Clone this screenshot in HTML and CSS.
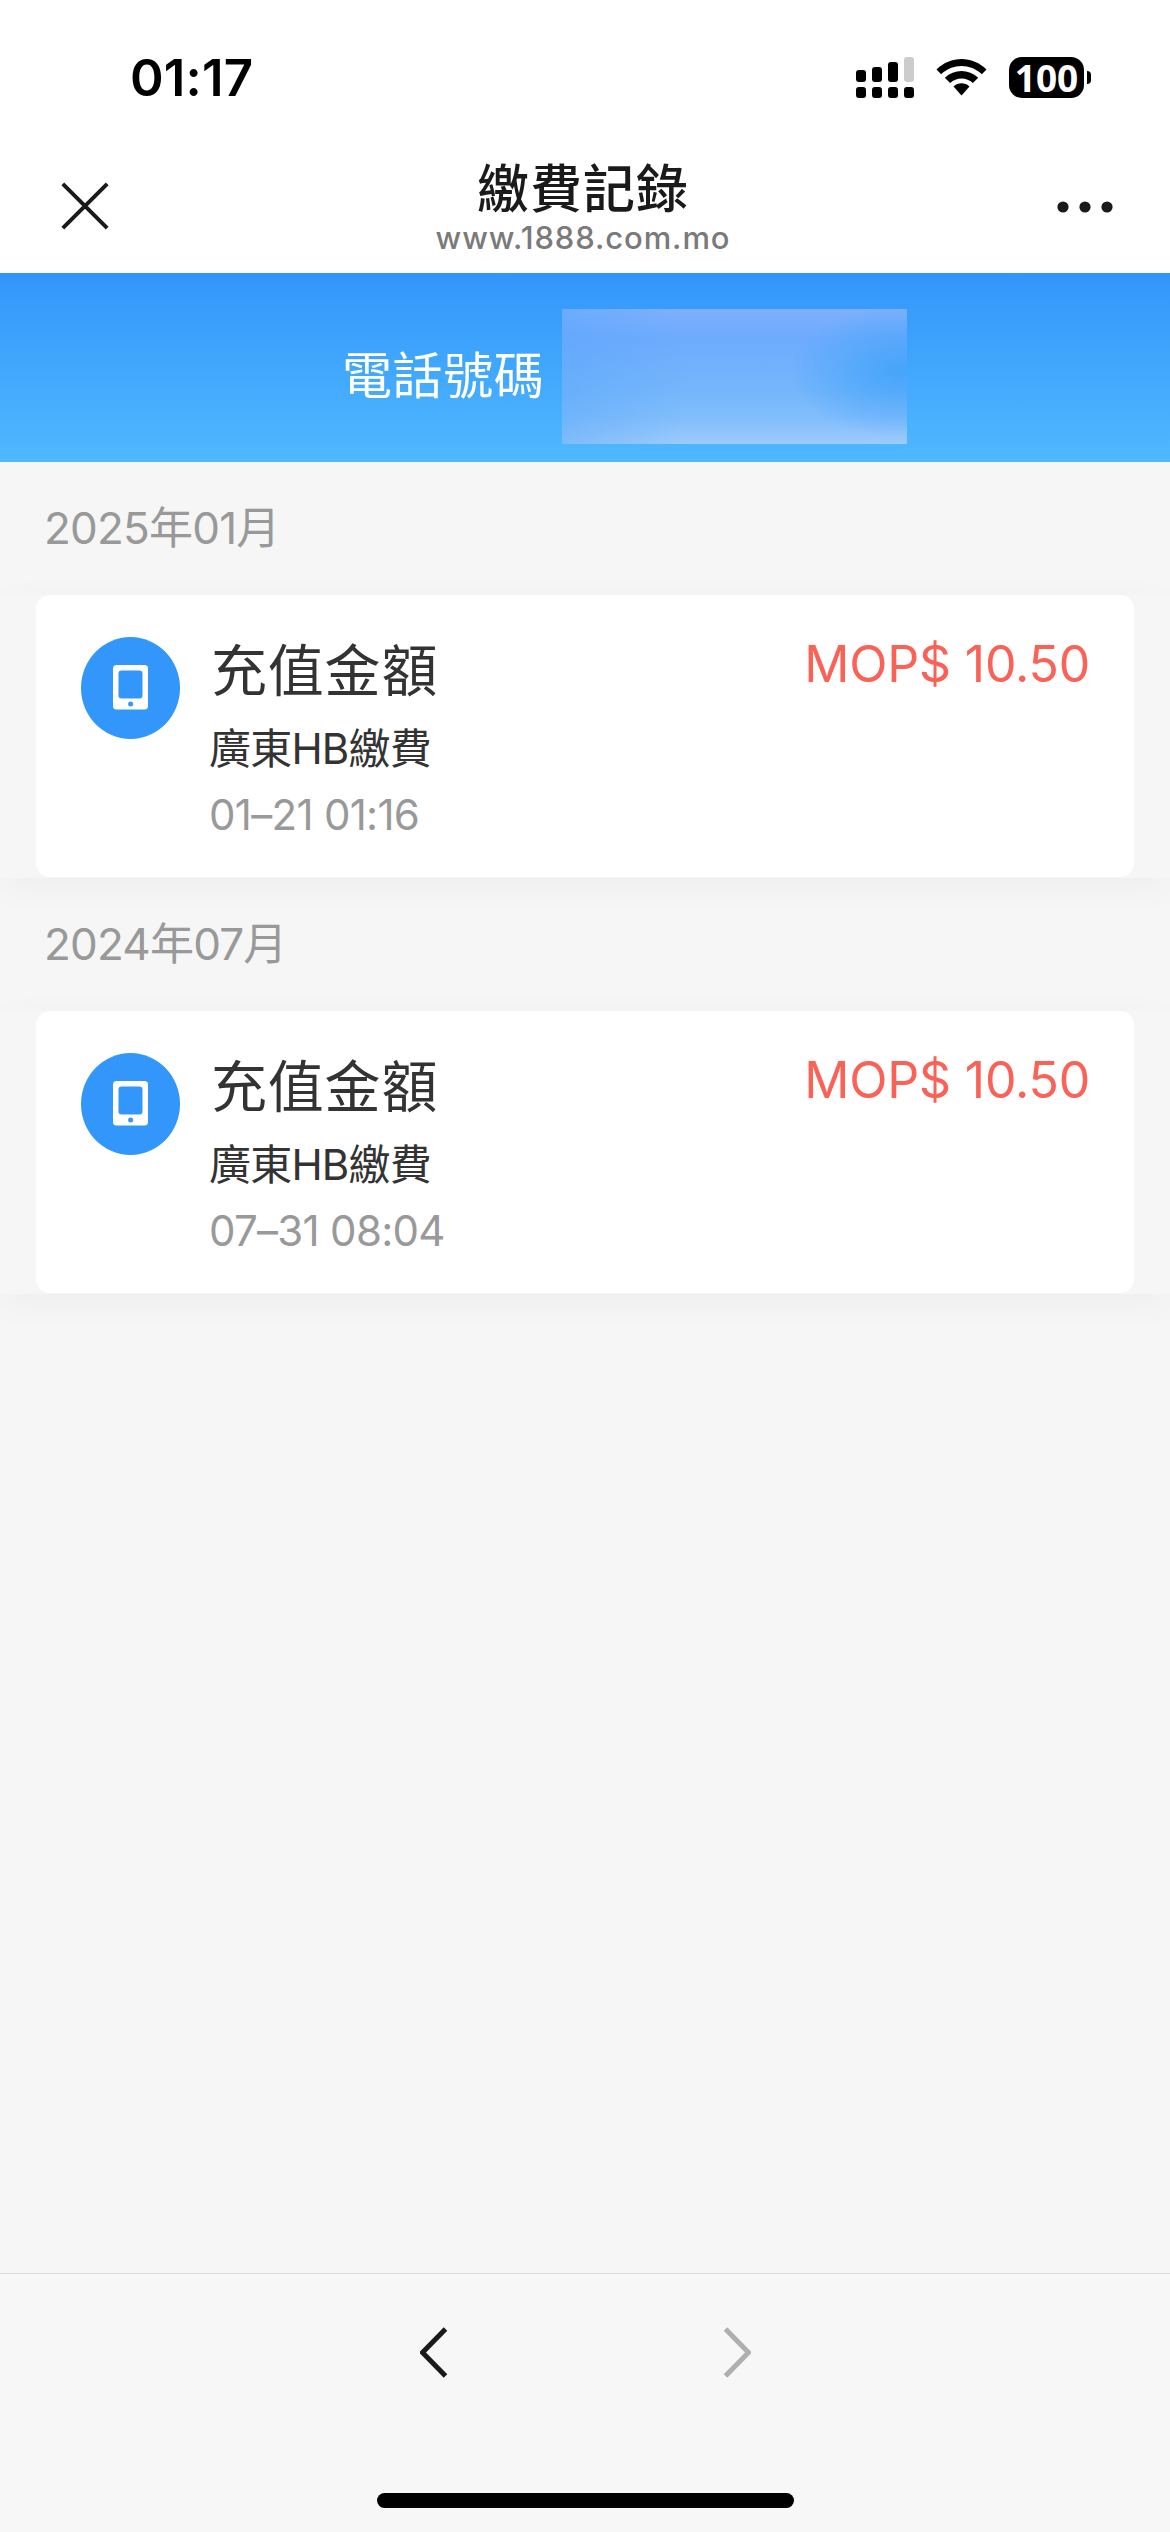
FILE: index.html
```html
<!DOCTYPE html>
<html lang="zh-Hant">
<head>
  <meta charset="UTF-8">
  <meta name="viewport" content="width=device-width, initial-scale=1.0">
  <title>繳費記錄</title>
  <link rel="stylesheet" href="styles.css">
</head>
<body>

<!-- Status bar -->
<div class="status-bar">
  <span class="clock">01:17</span>
  <div class="status-icons">
    <svg class="signal" width="58" height="41" viewBox="0 0 58 41">
      <rect x="0" y="13" width="10" height="12" rx="3"/>
      <rect x="16" y="10" width="10" height="15" rx="3"/>
      <rect x="32" y="5" width="10" height="20" rx="3"/>
      <rect class="off" x="48" y="0" width="10" height="25" rx="3"/>
      <rect x="0" y="30" width="10" height="11" rx="3"/>
      <rect x="16" y="30" width="10" height="11" rx="3"/>
      <rect x="32" y="30" width="10" height="11" rx="3"/>
      <rect x="48" y="30" width="10" height="11" rx="3"/>
    </svg>
    <svg class="wifi" width="51" height="41" viewBox="0 0 51 41">
      <path d="M0.5 12.5C14.5 -1.5 36.5 -1.5 50.5 12.5L45.8 17.3C34.5 6.3 16.500 6.300 5.200 17.300Z"/>
      <path d="M8.800 20.700C18.200 11.800 32.800 11.800 42.200 20.700L36.900 26C30.500 20 20.500 20 14.100 26Z"/>
      <path d="M17.500 29.400C22 25.200 29 25.200 33.500 29.400L25.500 38.500Z"/>
    </svg>
    <div class="battery"><span>100</span></div>
  </div>
</div>

<!-- Title bar -->
<header class="nav-bar">
  <svg class="close" width="48" height="48" viewBox="0 0 48 48">
    <path d="M1.800 1.800L46.200 46.200M46.200 1.800L1.800 46.200"/>
  </svg>
  <div class="nav-title">
    <h1>繳費記錄</h1>
    <p>www.1888.com.mo</p>
  </div>
  <svg class="more" width="56" height="12" viewBox="0 0 56 12">
    <circle cx="6" cy="6" r="5.600"/>
    <circle cx="28" cy="6" r="5.600"/>
    <circle cx="50" cy="6" r="5.600"/>
  </svg>
</header>

<div class="phone-bar">
  <span>電話號碼</span>
  <div class="phone-mask"></div>
</div>

<main class="records">
  <h2 class="month">2025年01月</h2>
  <div class="record-list">
    <div class="record">
      <svg class="record-icon" width="99" height="102" viewBox="0 0 99 102">
        <ellipse cx="49.500" cy="51" rx="49.500" ry="51" fill="#3296fa"/>
        <rect x="32" y="28" width="35" height="44.500" rx="3.500" fill="#fff"/>
        <rect x="37.500" y="33.500" width="24" height="28" rx="3" fill="#3296fa"/>
        <circle cx="49.600" cy="67" r="2.500" fill="#3296fa"/>
      </svg>
      <div class="record-info">
        <div class="record-title">充值金額</div>
        <div class="record-desc">廣東HB繳費</div>
        <div class="record-time">01–21 01:16</div>
      </div>
      <div class="record-amount">MOP$ 10.50</div>
    </div>
  </div>

  <h2 class="month">2024年07月</h2>
  <div class="record-list">
    <div class="record">
      <svg class="record-icon" width="99" height="102" viewBox="0 0 99 102">
        <ellipse cx="49.500" cy="51" rx="49.500" ry="51" fill="#3296fa"/>
        <rect x="32" y="28" width="35" height="44.500" rx="3.500" fill="#fff"/>
        <rect x="37.500" y="33.500" width="24" height="28" rx="3" fill="#3296fa"/>
        <circle cx="49.600" cy="67" r="2.500" fill="#3296fa"/>
      </svg>
      <div class="record-info">
        <div class="record-title">充值金額</div>
        <div class="record-desc">廣東HB繳費</div>
        <div class="record-time">07–31 08:04</div>
      </div>
      <div class="record-amount">MOP$ 10.50</div>
    </div>
  </div>
</main>

<!-- Browser toolbar -->
<footer class="toolbar">
  <div class="toolbar-buttons">
    <svg class="arrow" width="28" height="51" viewBox="0 0 28 51">
      <path d="M25.500 2L2.500 25.500L25.500 49"/>
    </svg>
    <svg class="arrow disabled" width="28" height="51" viewBox="0 0 28 51">
      <path d="M2.500 2L25.500 25.500L2.500 49"/>
    </svg>
  </div>
  <div class="home-indicator"></div>
</footer>

</body>
</html>
```
FILE: styles.css
```css
* {
  box-sizing: border-box;
}

body {
  margin: 0;
  height: 2532px;
  display: flex;
  flex-direction: column;
  background: #f6f6f6;
  font-family: Inter, "Noto Sans CJK TC", sans-serif;
  color: #333;
}

h1, h2, p {
  margin: 0;
  font-weight: 400;
}

svg {
  display: block;
  flex: none;
}

/* Status bar */
.status-bar {
  height: 156px;
  padding: 0 79px 0 130px;
  display: flex;
  justify-content: space-between;
  background: #fff;
  color: #000;
}

.clock {
  margin-top: 48px;
  font-size: 51px;
  line-height: 60px;
  font-weight: 600;
  letter-spacing: 0.2px;
}

.status-icons {
  margin-top: 57px;
  height: 41px;
  display: flex;
}

.signal .off {
  fill: #ccc;
}

.wifi {
  margin: 0 22px;
}

.battery {
  width: 75px;
  height: 41px;
  margin-right: 7px;
  border-radius: 13px;
  background: #000;
  color: #fff;
  font-family: "Noto Sans", sans-serif;
  font-size: 37px;
  line-height: 41px;
  font-weight: 700;
  text-align: center;
  position: relative;
}

.battery::after {
  content: "";
  position: absolute;
  left: 78px;
  top: 14px;
  width: 4px;
  height: 13px;
  border-radius: 0 4px 4px 0;
  background: #000;
}

/* Title bar */
.nav-bar {
  height: 117px;
  padding: 0 57px 0 61px;
  display: flex;
  justify-content: space-between;
  background: #fff;
  color: #1a1a1a;
}

.close {
  margin-top: 26px;
  fill: none;
  stroke: #1a1a1a;
  stroke-width: 4;
}

.more {
  margin-top: 45px;
  fill: #1a1a1a;
}

.nav-title {
  text-align: center;
}

.nav-title h1 {
  margin-top: 3px;
  font-size: 52px;
  line-height: 62px;
  font-weight: 500;
  letter-spacing: 1px;
}

.nav-title p {
  margin-top: -1px;
  font-size: 31px;
  line-height: 36px;
  font-weight: 500;
  letter-spacing: 0.9px;
  color: #7a7a7a;
}

/* Phone number */
.phone-bar {
  height: 189px;
  padding: 36px 0 0 342px;
  display: flex;
  background: linear-gradient(#3296fa, #50b8ff);
  color: #fff;
  font-size: 50px;
  line-height: 134px;
  letter-spacing: 0.6px;
}

.phone-bar span {
  width: 220px;
  white-space: nowrap;
}

.phone-mask {
  width: 345px;
  height: 135px;
  background:
    radial-gradient(ellipse 110px 65px at 98% 46%, rgba(65, 163, 250, 0.9), rgba(65, 163, 250, 0)),
    linear-gradient(90deg, rgba(85, 165, 252, 0.4), rgba(85, 165, 252, 0) 35%),
    linear-gradient(#7db0fd, #6eabfd 22%, #74b6fb 60%, #80bdfc 80%, #9ccafb);
}

/* Records */
.records {
  flex: 1;
}

.month {
  height: 133px;
  padding-left: 44px;
  font-size: 44px;
  line-height: 133px;
  letter-spacing: -0.8px;
  color: #999;
}

.record-list {
  padding: 0 36px;
  background: #f6f6f6;
  box-shadow: 0 9px 36px rgba(0, 0, 0, 0.035);
}

.record {
  height: 282px;
  margin-bottom: 1px;
  padding: 42px 45px 0;
  display: flex;
  border-radius: 14px;
  background: #fff;
}

/* keeps the 1px gap inside the list */
.record-list {
  display: flow-root;
}

.record-info {
  flex: 1;
  padding-left: 29px;
}

.record-title {
  padding-left: 2px;
  font-size: 56px;
  line-height: 68px;
  letter-spacing: 0.8px;
}

.record-desc {
  margin-top: 14px;
  font-size: 42px;
  line-height: 60px;
  letter-spacing: -0.8px;
}

.record-time {
  margin-top: 6px;
  font-size: 42px;
  line-height: 60px;
  letter-spacing: -0.7px;
  color: #999;
}

.record-amount {
  margin-right: -1px;
  font-size: 50px;
  line-height: 54px;
  letter-spacing: -0.2px;
  color: #fa6157;
}

/* Toolbar */
.toolbar {
  height: 259px;
  padding-top: 53px;
  border-top: 1px solid #dcdcdc;
  background: #f7f7f7;
}

.toolbar-buttons {
  display: flex;
  justify-content: center;
  gap: 275px;
}

.arrow {
  fill: none;
  stroke: #1a1a1a;
  stroke-width: 5;
}

.arrow.disabled {
  stroke: #afafaf;
}

.home-indicator {
  width: 417px;
  height: 15px;
  margin: 115px auto 0;
  border-radius: 8px;
  background: #000;
}
```
